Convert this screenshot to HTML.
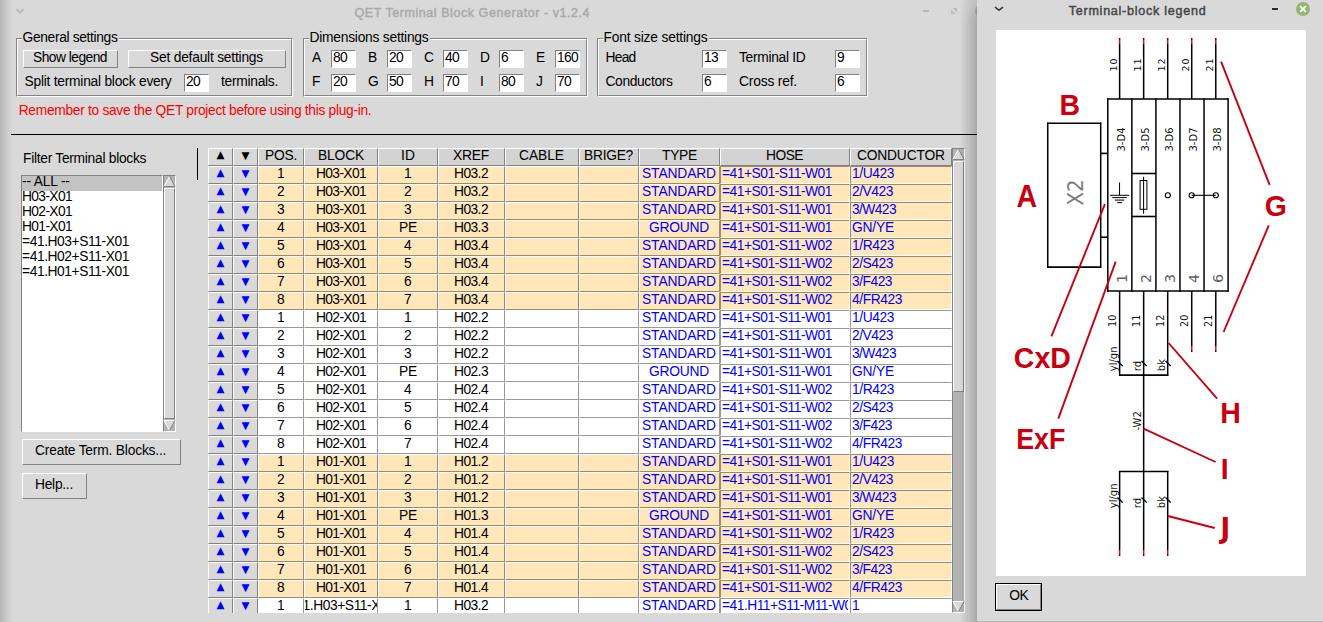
<!DOCTYPE html>
<html lang="en"><head><meta charset="utf-8"><title>QET Terminal Block Generator - v1.2.4</title>
<style>
html,body{margin:0;padding:0}
body{width:1323px;height:622px;overflow:hidden;background:#d9d9d9;position:relative;
 font-family:"Liberation Sans",sans-serif;font-size:13px;color:#000}
div,span,svg{position:absolute;box-sizing:border-box}
.t{white-space:pre;line-height:15px;height:15px;font-size:13.8px}
.rs{border:1px solid;border-color:#fff #828282 #828282 #fff;background:#d9d9d9}
.sk{border:1px solid;border-color:#828282 #fff #fff #828282;background:#fff}
.g1{border:1px solid;border-color:#828282 #fff #fff #828282}
.g2{border:1px solid;border-color:#fff #828282 #828282 #fff;left:0;top:0;right:0;bottom:0}
.lb{background:#d9d9d9;height:4px}
.hd{border:1px solid;border-color:#fff #828282 #828282 #fff;background:#d9d9d9}
.hc{border:1px solid;border-color:#fff #828282 #828282 #fff;background:#d3d3d3}
.cw{border:1px solid;border-color:#fff #998b70 #998b70 #fff;background:#ffe7ba}
.cn{border:1px solid;border-color:#fff #999 #999 #fff;background:#fff}
.ew{border:1px solid;border-color:#998b70 #fff #fff #998b70;background:#ffe7ba}
.en{border:1px solid;border-color:#999 #fff #fff #999;background:#fff}
.ar{font-family:"DejaVu Sans",sans-serif;font-size:10.4px;line-height:14px;height:14px;white-space:pre;text-align:center;width:25px}
.clip{overflow:hidden}
</style></head><body>

<div style="left:0;top:0;width:13px;height:622px;background:linear-gradient(90deg,#b6b6b6 0,#c4c4c4 35%,#d2d2d2 70%,#d9d9d9 100%)"></div>
<svg style="left:0;top:0" width="978" height="30" viewBox="0 0 978 30"><polyline points="16.5,9.3 20,12.5 23.5,9.3" fill="none" stroke="#b9b9b9" stroke-width="1.9"/><rect x="923" y="10" width="6" height="2" fill="#b7b7b7"/><polygon points="952.6,8 957,8 957,12.4" fill="#bbb"/><polygon points="951,9.6 951,14 955.4,14" fill="#bbb"/><circle cx="982.1" cy="11" r="7" fill="#b6b6b6"/></svg>
<span id="mt" style="left:354.5px;top:3.8px;font-size:12.5px;line-height:18px;white-space:pre;color:#a9a9a9;-webkit-text-stroke:0.45px #a9a9a9;letter-spacing:0.56px">QET Terminal Block Generator - v1.2.4</span>
<div class="g1" style="left:16px;top:38px;width:277px;height:59px;"><div class="g2"></div></div>
<div class="lb" style="left:22px;top:38px;width:97px;height:4px;"></div>
<span class="t " style="left:22.5px;top:30px;letter-spacing:-0.343px;">General settings</span>
<div class="g1" style="left:303px;top:38px;width:285px;height:59px;"><div class="g2"></div></div>
<div class="lb" style="left:309px;top:38px;width:121px;height:4px;"></div>
<span class="t " style="left:309.5px;top:30px;letter-spacing:-0.236px;">Dimensions settings</span>
<div class="g1" style="left:597px;top:38px;width:271px;height:59px;"><div class="g2"></div></div>
<div class="lb" style="left:603px;top:38px;width:106px;height:4px;"></div>
<span class="t " style="left:603.5px;top:30px;letter-spacing:-0.187px;">Font size settings</span>
<div class="rs" style="left:23px;top:50px;width:95px;height:18px;"></div>
<span class="t " style="left:33px;top:50px;letter-spacing:-0.527px;">Show legend</span>
<div class="rs" style="left:128px;top:50px;width:158px;height:18px;"></div>
<span class="t " style="left:150px;top:50px;letter-spacing:-0.218px;">Set default settings</span>
<span class="t " style="left:24.5px;top:74px;letter-spacing:-0.246px;">Split terminal block every</span>
<div class="sk" style="left:184px;top:74px;width:25px;height:18px;"></div>
<span class="t " style="left:186px;top:74px;letter-spacing:-0.675px;">20</span>
<span class="t " style="left:221px;top:74px;letter-spacing:-0.282px;">terminals.</span>
<span class="t " style="left:312px;top:50px;letter-spacing:-0.204px;">A</span>
<div class="sk" style="left:331px;top:50px;width:25px;height:18px;"></div>
<span class="t " style="left:333px;top:50px;letter-spacing:-0.675px;">80</span>
<span class="t " style="left:368px;top:50px;letter-spacing:-0.204px;">B</span>
<div class="sk" style="left:387px;top:50px;width:25px;height:18px;"></div>
<span class="t " style="left:389px;top:50px;letter-spacing:-0.675px;">20</span>
<span class="t " style="left:424px;top:50px;letter-spacing:0.032px;">C</span>
<div class="sk" style="left:443px;top:50px;width:25px;height:18px;"></div>
<span class="t " style="left:445px;top:50px;letter-spacing:-0.675px;">40</span>
<span class="t " style="left:480px;top:50px;letter-spacing:0.032px;">D</span>
<div class="sk" style="left:499px;top:50px;width:25px;height:18px;"></div>
<span class="t " style="left:501px;top:50px;letter-spacing:-0.675px;">6</span>
<span class="t " style="left:536px;top:50px;letter-spacing:-0.204px;">E</span>
<div class="sk" style="left:555px;top:50px;width:25px;height:18px;"></div>
<span class="t " style="left:557px;top:50px;letter-spacing:-0.675px;">160</span>
<span class="t " style="left:312px;top:74px;letter-spacing:-0.429px;">F</span>
<div class="sk" style="left:331px;top:74px;width:25px;height:18px;"></div>
<span class="t " style="left:333px;top:74px;letter-spacing:-0.675px;">20</span>
<span class="t " style="left:368px;top:74px;letter-spacing:-0.732px;">G</span>
<div class="sk" style="left:387px;top:74px;width:25px;height:18px;"></div>
<span class="t " style="left:389px;top:74px;letter-spacing:-0.675px;">50</span>
<span class="t " style="left:424px;top:74px;letter-spacing:-0.968px;">H</span>
<div class="sk" style="left:443px;top:74px;width:25px;height:18px;"></div>
<span class="t " style="left:445px;top:74px;letter-spacing:-0.675px;">70</span>
<span class="t " style="left:480px;top:74px;letter-spacing:0.168px;">I</span>
<div class="sk" style="left:499px;top:74px;width:25px;height:18px;"></div>
<span class="t " style="left:501px;top:74px;letter-spacing:-0.675px;">80</span>
<span class="t " style="left:536px;top:74px;letter-spacing:0.100px;">J</span>
<div class="sk" style="left:555px;top:74px;width:25px;height:18px;"></div>
<span class="t " style="left:557px;top:74px;letter-spacing:-0.675px;">70</span>
<span class="t " style="left:605.5px;top:50px;letter-spacing:-0.748px;">Head</span>
<div class="sk" style="left:702px;top:50px;width:25px;height:18px;"></div>
<span class="t " style="left:704px;top:50px;letter-spacing:-0.675px;">13</span>
<span class="t " style="left:605.5px;top:74px;letter-spacing:-0.357px;">Conductors</span>
<div class="sk" style="left:702px;top:74px;width:25px;height:18px;"></div>
<span class="t " style="left:704px;top:74px;letter-spacing:-0.675px;">6</span>
<span class="t " style="left:739px;top:50px;letter-spacing:-0.301px;">Terminal ID</span>
<div class="sk" style="left:835px;top:50px;width:25px;height:18px;"></div>
<span class="t " style="left:837px;top:50px;letter-spacing:-0.675px;">9</span>
<span class="t " style="left:739px;top:74px;letter-spacing:-0.181px;">Cross ref.</span>
<div class="sk" style="left:835px;top:74px;width:25px;height:18px;"></div>
<span class="t " style="left:837px;top:74px;letter-spacing:-0.675px;">6</span>
<span class="t " style="left:18.7px;top:103px;letter-spacing:-0.309px;color:#ff0000;">Remember to save the QET project before using this plug-in.</span>
<div style="left:11px;top:134px;width:970px;height:1px;background:#000"></div>
<span class="t " style="left:23px;top:151px;letter-spacing:-0.279px;">Filter Terminal blocks</span>
<div class="sk" style="left:21px;top:175px;width:142px;height:257px;"></div>
<div style="left:22px;top:176px;width:140px;height:15px;background:#c3c3c3"></div>
<span class="t " style="left:22px;top:174px;letter-spacing:-0.178px;">-- ALL --</span>
<span class="t " style="left:22px;top:189px;letter-spacing:-0.638px;">H03-X01</span>
<span class="t " style="left:22px;top:204px;letter-spacing:-0.638px;">H02-X01</span>
<span class="t " style="left:22px;top:219px;letter-spacing:-0.638px;">H01-X01</span>
<span class="t " style="left:22px;top:234px;letter-spacing:-0.421px;">=41.H03+S11-X01</span>
<span class="t " style="left:22px;top:249px;letter-spacing:-0.421px;">=41.H02+S11-X01</span>
<span class="t " style="left:22px;top:264px;letter-spacing:-0.421px;">=41.H01+S11-X01</span>
<div style="left:163px;top:175px;width:13px;height:257px;background:#b3b3b3;border:1px solid;border-color:#828282 #fff #fff #828282"></div>
<svg style="left:163px;top:175px" width="13" height="257" viewBox="0 0 13 257" shape-rendering="crispEdges"><polygon points="6.5,1.2 12.2,11.5 0.8,11.5" fill="#d9d9d9"/><line x1="6.5" y1="1.2" x2="0.9" y2="11.6" stroke="#fff" stroke-width="1" shape-rendering="auto"/><line x1="6.5" y1="1.2" x2="12.1" y2="11.6" stroke="#828282" stroke-width="1" shape-rendering="auto"/><rect x="1" y="11" width="11" height="1" fill="#828282"/><polygon points="6.5,255.6 12.2,245.5 0.8,245.5" fill="#d9d9d9"/><rect x="1" y="245" width="11" height="1" fill="#fff"/><line x1="6.5" y1="255.6" x2="0.9" y2="245.4" stroke="#fff" stroke-width="1" shape-rendering="auto"/><line x1="6.5" y1="255.6" x2="12.1" y2="245.4" stroke="#828282" stroke-width="1" shape-rendering="auto"/></svg>
<div class="rs" style="left:164px;top:188px;width:11px;height:231px"></div>
<div class="rs" style="left:22px;top:439px;width:159px;height:26px;"></div>
<span class="t " style="left:35px;top:443px;letter-spacing:-0.193px;">Create Term. Blocks...</span>
<div class="rs" style="left:22px;top:473px;width:65px;height:26px;"></div>
<span class="t " style="left:35px;top:477px;letter-spacing:-0.269px;">Help...</span>
<div style="left:197px;top:148px;width:1px;height:32px;background:#000"></div>
<div class="clip" style="left:208px;top:148px;width:744px;height:465px">
<div class="hd" style="left:0px;top:0px;width:25px;height:18px;"></div>
<span class="ar" style="left:0px;top:-1px">▲</span>
<div class="hd" style="left:25px;top:0px;width:25px;height:18px;"></div>
<span class="ar" style="left:25px;top:0px">▼</span>
<div class="hc" style="left:50px;top:0px;width:46px;height:18px;"></div>
<span class="t " style="left:57px;top:0px;letter-spacing:-0.243px;">POS.</span>
<div class="hc" style="left:96px;top:0px;width:74px;height:18px;"></div>
<span class="t " style="left:110px;top:0px;letter-spacing:-0.156px;">BLOCK</span>
<div class="hc" style="left:170px;top:0px;width:60px;height:18px;"></div>
<span class="t " style="left:193px;top:0px;letter-spacing:0.100px;">ID</span>
<div class="hc" style="left:230px;top:0px;width:67px;height:18px;"></div>
<span class="t " style="left:245px;top:0px;letter-spacing:-0.201px;">XREF</span>
<div class="hc" style="left:297px;top:0px;width:74px;height:18px;"></div>
<span class="t " style="left:311px;top:0px;letter-spacing:-0.051px;">CABLE</span>
<div class="hc" style="left:371px;top:0px;width:60px;height:18px;"></div>
<span class="t " style="left:376px;top:0px;letter-spacing:-0.269px;">BRIGE?</span>
<div class="hc" style="left:431px;top:0px;width:81px;height:18px;"></div>
<span class="t " style="left:454px;top:0px;letter-spacing:-0.260px;">TYPE</span>
<div class="hc" style="left:512px;top:0px;width:130px;height:18px;"></div>
<span class="t " style="left:558px;top:0px;letter-spacing:-0.527px;">HOSE</span>
<div class="hc" style="left:642px;top:0px;width:102px;height:18px;"></div>
<span class="t " style="left:649px;top:0px;letter-spacing:-0.189px;">CONDUCTOR</span>
<div class="hd" style="left:0px;top:18px;width:25px;height:18px;"></div>
<div class="hd" style="left:25px;top:18px;width:25px;height:18px;"></div>
<span class="ar" style="left:0px;top:17px;color:#0000ff">▲</span>
<span class="ar" style="left:25px;top:18px;color:#0000ff">▼</span>
<div class="cw" style="left:50px;top:18px;width:46px;height:18px;"></div>
<div class="cw" style="left:96px;top:18px;width:74px;height:18px;"></div>
<div class="cw" style="left:170px;top:18px;width:60px;height:18px;"></div>
<div class="cw" style="left:230px;top:18px;width:67px;height:18px;"></div>
<div class="cw" style="left:297px;top:18px;width:74px;height:18px;"></div>
<div class="cw" style="left:371px;top:18px;width:60px;height:18px;"></div>
<div class="cw" style="left:431px;top:18px;width:81px;height:18px;"></div>
<div class="ew" style="left:512px;top:18px;width:130px;height:18px;"></div>
<div class="ew" style="left:642px;top:18px;width:102px;height:18px;"></div>
<span class="t " style="left:69px;top:18px;letter-spacing:-0.675px;">1</span>
<span class="t " style="left:108px;top:18px;letter-spacing:-0.638px;">H03-X01</span>
<span class="t " style="left:196px;top:18px;letter-spacing:-0.675px;">1</span>
<span class="t " style="left:246px;top:18px;letter-spacing:-0.565px;">H03.2</span>
<span class="t " style="left:434px;top:18px;letter-spacing:-0.114px;color:#0000ff;">STANDARD</span>
<div class="clip" style="left:514px;top:19px;width:126px;height:16px">
<span class="t " style="left:0px;top:-1px;letter-spacing:-0.476px;color:#0000ff;">=41+S01-S11-W01</span>
</div>
<span class="t " style="left:644px;top:18px;letter-spacing:-0.417px;color:#0000ff;">1/U423</span>
<div class="hd" style="left:0px;top:36px;width:25px;height:18px;"></div>
<div class="hd" style="left:25px;top:36px;width:25px;height:18px;"></div>
<span class="ar" style="left:0px;top:35px;color:#0000ff">▲</span>
<span class="ar" style="left:25px;top:36px;color:#0000ff">▼</span>
<div class="cw" style="left:50px;top:36px;width:46px;height:18px;"></div>
<div class="cw" style="left:96px;top:36px;width:74px;height:18px;"></div>
<div class="cw" style="left:170px;top:36px;width:60px;height:18px;"></div>
<div class="cw" style="left:230px;top:36px;width:67px;height:18px;"></div>
<div class="cw" style="left:297px;top:36px;width:74px;height:18px;"></div>
<div class="cw" style="left:371px;top:36px;width:60px;height:18px;"></div>
<div class="cw" style="left:431px;top:36px;width:81px;height:18px;"></div>
<div class="ew" style="left:512px;top:36px;width:130px;height:18px;"></div>
<div class="ew" style="left:642px;top:36px;width:102px;height:18px;"></div>
<span class="t " style="left:69px;top:36px;letter-spacing:-0.675px;">2</span>
<span class="t " style="left:108px;top:36px;letter-spacing:-0.638px;">H03-X01</span>
<span class="t " style="left:196px;top:36px;letter-spacing:-0.675px;">2</span>
<span class="t " style="left:246px;top:36px;letter-spacing:-0.565px;">H03.2</span>
<span class="t " style="left:434px;top:36px;letter-spacing:-0.114px;color:#0000ff;">STANDARD</span>
<div class="clip" style="left:514px;top:37px;width:126px;height:16px">
<span class="t " style="left:0px;top:-1px;letter-spacing:-0.476px;color:#0000ff;">=41+S01-S11-W01</span>
</div>
<span class="t " style="left:644px;top:36px;letter-spacing:-0.456px;color:#0000ff;">2/V423</span>
<div class="hd" style="left:0px;top:54px;width:25px;height:18px;"></div>
<div class="hd" style="left:25px;top:54px;width:25px;height:18px;"></div>
<span class="ar" style="left:0px;top:53px;color:#0000ff">▲</span>
<span class="ar" style="left:25px;top:54px;color:#0000ff">▼</span>
<div class="cw" style="left:50px;top:54px;width:46px;height:18px;"></div>
<div class="cw" style="left:96px;top:54px;width:74px;height:18px;"></div>
<div class="cw" style="left:170px;top:54px;width:60px;height:18px;"></div>
<div class="cw" style="left:230px;top:54px;width:67px;height:18px;"></div>
<div class="cw" style="left:297px;top:54px;width:74px;height:18px;"></div>
<div class="cw" style="left:371px;top:54px;width:60px;height:18px;"></div>
<div class="cw" style="left:431px;top:54px;width:81px;height:18px;"></div>
<div class="ew" style="left:512px;top:54px;width:130px;height:18px;"></div>
<div class="ew" style="left:642px;top:54px;width:102px;height:18px;"></div>
<span class="t " style="left:69px;top:54px;letter-spacing:-0.675px;">3</span>
<span class="t " style="left:108px;top:54px;letter-spacing:-0.638px;">H03-X01</span>
<span class="t " style="left:196px;top:54px;letter-spacing:-0.675px;">3</span>
<span class="t " style="left:246px;top:54px;letter-spacing:-0.565px;">H03.2</span>
<span class="t " style="left:434px;top:54px;letter-spacing:-0.114px;color:#0000ff;">STANDARD</span>
<div class="clip" style="left:514px;top:55px;width:126px;height:16px">
<span class="t " style="left:0px;top:-1px;letter-spacing:-0.476px;color:#0000ff;">=41+S01-S11-W01</span>
</div>
<span class="t " style="left:644px;top:54px;letter-spacing:-0.593px;color:#0000ff;">3/W423</span>
<div class="hd" style="left:0px;top:72px;width:25px;height:18px;"></div>
<div class="hd" style="left:25px;top:72px;width:25px;height:18px;"></div>
<span class="ar" style="left:0px;top:71px;color:#0000ff">▲</span>
<span class="ar" style="left:25px;top:72px;color:#0000ff">▼</span>
<div class="cw" style="left:50px;top:72px;width:46px;height:18px;"></div>
<div class="cw" style="left:96px;top:72px;width:74px;height:18px;"></div>
<div class="cw" style="left:170px;top:72px;width:60px;height:18px;"></div>
<div class="cw" style="left:230px;top:72px;width:67px;height:18px;"></div>
<div class="cw" style="left:297px;top:72px;width:74px;height:18px;"></div>
<div class="cw" style="left:371px;top:72px;width:60px;height:18px;"></div>
<div class="cw" style="left:431px;top:72px;width:81px;height:18px;"></div>
<div class="ew" style="left:512px;top:72px;width:130px;height:18px;"></div>
<div class="ew" style="left:642px;top:72px;width:102px;height:18px;"></div>
<span class="t " style="left:69px;top:72px;letter-spacing:-0.675px;">4</span>
<span class="t " style="left:108px;top:72px;letter-spacing:-0.638px;">H03-X01</span>
<span class="t " style="left:191px;top:72px;letter-spacing:-0.204px;">PE</span>
<span class="t " style="left:246px;top:72px;letter-spacing:-0.565px;">H03.3</span>
<span class="t " style="left:441px;top:72px;letter-spacing:-0.223px;color:#0000ff;">GROUND</span>
<div class="clip" style="left:514px;top:73px;width:126px;height:16px">
<span class="t " style="left:0px;top:-1px;letter-spacing:-0.476px;color:#0000ff;">=41+S01-S11-W01</span>
</div>
<span class="t " style="left:644px;top:72px;letter-spacing:-0.188px;color:#0000ff;">GN/YE</span>
<div class="hd" style="left:0px;top:90px;width:25px;height:18px;"></div>
<div class="hd" style="left:25px;top:90px;width:25px;height:18px;"></div>
<span class="ar" style="left:0px;top:89px;color:#0000ff">▲</span>
<span class="ar" style="left:25px;top:90px;color:#0000ff">▼</span>
<div class="cw" style="left:50px;top:90px;width:46px;height:18px;"></div>
<div class="cw" style="left:96px;top:90px;width:74px;height:18px;"></div>
<div class="cw" style="left:170px;top:90px;width:60px;height:18px;"></div>
<div class="cw" style="left:230px;top:90px;width:67px;height:18px;"></div>
<div class="cw" style="left:297px;top:90px;width:74px;height:18px;"></div>
<div class="cw" style="left:371px;top:90px;width:60px;height:18px;"></div>
<div class="cw" style="left:431px;top:90px;width:81px;height:18px;"></div>
<div class="ew" style="left:512px;top:90px;width:130px;height:18px;"></div>
<div class="ew" style="left:642px;top:90px;width:102px;height:18px;"></div>
<span class="t " style="left:69px;top:90px;letter-spacing:-0.675px;">5</span>
<span class="t " style="left:108px;top:90px;letter-spacing:-0.638px;">H03-X01</span>
<span class="t " style="left:196px;top:90px;letter-spacing:-0.675px;">4</span>
<span class="t " style="left:246px;top:90px;letter-spacing:-0.565px;">H03.4</span>
<span class="t " style="left:434px;top:90px;letter-spacing:-0.114px;color:#0000ff;">STANDARD</span>
<div class="clip" style="left:514px;top:91px;width:126px;height:16px">
<span class="t " style="left:0px;top:-1px;letter-spacing:-0.476px;color:#0000ff;">=41+S01-S11-W02</span>
</div>
<span class="t " style="left:644px;top:90px;letter-spacing:-0.417px;color:#0000ff;">1/R423</span>
<div class="hd" style="left:0px;top:108px;width:25px;height:18px;"></div>
<div class="hd" style="left:25px;top:108px;width:25px;height:18px;"></div>
<span class="ar" style="left:0px;top:107px;color:#0000ff">▲</span>
<span class="ar" style="left:25px;top:108px;color:#0000ff">▼</span>
<div class="cw" style="left:50px;top:108px;width:46px;height:18px;"></div>
<div class="cw" style="left:96px;top:108px;width:74px;height:18px;"></div>
<div class="cw" style="left:170px;top:108px;width:60px;height:18px;"></div>
<div class="cw" style="left:230px;top:108px;width:67px;height:18px;"></div>
<div class="cw" style="left:297px;top:108px;width:74px;height:18px;"></div>
<div class="cw" style="left:371px;top:108px;width:60px;height:18px;"></div>
<div class="cw" style="left:431px;top:108px;width:81px;height:18px;"></div>
<div class="ew" style="left:512px;top:108px;width:130px;height:18px;"></div>
<div class="ew" style="left:642px;top:108px;width:102px;height:18px;"></div>
<span class="t " style="left:69px;top:108px;letter-spacing:-0.675px;">6</span>
<span class="t " style="left:108px;top:108px;letter-spacing:-0.638px;">H03-X01</span>
<span class="t " style="left:196px;top:108px;letter-spacing:-0.675px;">5</span>
<span class="t " style="left:246px;top:108px;letter-spacing:-0.565px;">H03.4</span>
<span class="t " style="left:434px;top:108px;letter-spacing:-0.114px;color:#0000ff;">STANDARD</span>
<div class="clip" style="left:514px;top:109px;width:126px;height:16px">
<span class="t " style="left:0px;top:-1px;letter-spacing:-0.476px;color:#0000ff;">=41+S01-S11-W02</span>
</div>
<span class="t " style="left:644px;top:108px;letter-spacing:-0.456px;color:#0000ff;">2/S423</span>
<div class="hd" style="left:0px;top:126px;width:25px;height:18px;"></div>
<div class="hd" style="left:25px;top:126px;width:25px;height:18px;"></div>
<span class="ar" style="left:0px;top:125px;color:#0000ff">▲</span>
<span class="ar" style="left:25px;top:126px;color:#0000ff">▼</span>
<div class="cw" style="left:50px;top:126px;width:46px;height:18px;"></div>
<div class="cw" style="left:96px;top:126px;width:74px;height:18px;"></div>
<div class="cw" style="left:170px;top:126px;width:60px;height:18px;"></div>
<div class="cw" style="left:230px;top:126px;width:67px;height:18px;"></div>
<div class="cw" style="left:297px;top:126px;width:74px;height:18px;"></div>
<div class="cw" style="left:371px;top:126px;width:60px;height:18px;"></div>
<div class="cw" style="left:431px;top:126px;width:81px;height:18px;"></div>
<div class="ew" style="left:512px;top:126px;width:130px;height:18px;"></div>
<div class="ew" style="left:642px;top:126px;width:102px;height:18px;"></div>
<span class="t " style="left:69px;top:126px;letter-spacing:-0.675px;">7</span>
<span class="t " style="left:108px;top:126px;letter-spacing:-0.638px;">H03-X01</span>
<span class="t " style="left:196px;top:126px;letter-spacing:-0.675px;">6</span>
<span class="t " style="left:246px;top:126px;letter-spacing:-0.565px;">H03.4</span>
<span class="t " style="left:434px;top:126px;letter-spacing:-0.114px;color:#0000ff;">STANDARD</span>
<div class="clip" style="left:514px;top:127px;width:126px;height:16px">
<span class="t " style="left:0px;top:-1px;letter-spacing:-0.476px;color:#0000ff;">=41+S01-S11-W02</span>
</div>
<span class="t " style="left:644px;top:126px;letter-spacing:-0.493px;color:#0000ff;">3/F423</span>
<div class="hd" style="left:0px;top:144px;width:25px;height:18px;"></div>
<div class="hd" style="left:25px;top:144px;width:25px;height:18px;"></div>
<span class="ar" style="left:0px;top:143px;color:#0000ff">▲</span>
<span class="ar" style="left:25px;top:144px;color:#0000ff">▼</span>
<div class="cw" style="left:50px;top:144px;width:46px;height:18px;"></div>
<div class="cw" style="left:96px;top:144px;width:74px;height:18px;"></div>
<div class="cw" style="left:170px;top:144px;width:60px;height:18px;"></div>
<div class="cw" style="left:230px;top:144px;width:67px;height:18px;"></div>
<div class="cw" style="left:297px;top:144px;width:74px;height:18px;"></div>
<div class="cw" style="left:371px;top:144px;width:60px;height:18px;"></div>
<div class="cw" style="left:431px;top:144px;width:81px;height:18px;"></div>
<div class="ew" style="left:512px;top:144px;width:130px;height:18px;"></div>
<div class="ew" style="left:642px;top:144px;width:102px;height:18px;"></div>
<span class="t " style="left:69px;top:144px;letter-spacing:-0.675px;">8</span>
<span class="t " style="left:108px;top:144px;letter-spacing:-0.638px;">H03-X01</span>
<span class="t " style="left:196px;top:144px;letter-spacing:-0.675px;">7</span>
<span class="t " style="left:246px;top:144px;letter-spacing:-0.565px;">H03.4</span>
<span class="t " style="left:434px;top:144px;letter-spacing:-0.114px;color:#0000ff;">STANDARD</span>
<div class="clip" style="left:514px;top:145px;width:126px;height:16px">
<span class="t " style="left:0px;top:-1px;letter-spacing:-0.476px;color:#0000ff;">=41+S01-S11-W02</span>
</div>
<span class="t " style="left:644px;top:144px;letter-spacing:-0.418px;color:#0000ff;">4/FR423</span>
<div class="hd" style="left:0px;top:162px;width:25px;height:18px;"></div>
<div class="hd" style="left:25px;top:162px;width:25px;height:18px;"></div>
<span class="ar" style="left:0px;top:161px;color:#0000ff">▲</span>
<span class="ar" style="left:25px;top:162px;color:#0000ff">▼</span>
<div class="cn" style="left:50px;top:162px;width:46px;height:18px;"></div>
<div class="cn" style="left:96px;top:162px;width:74px;height:18px;"></div>
<div class="cn" style="left:170px;top:162px;width:60px;height:18px;"></div>
<div class="cn" style="left:230px;top:162px;width:67px;height:18px;"></div>
<div class="cn" style="left:297px;top:162px;width:74px;height:18px;"></div>
<div class="cn" style="left:371px;top:162px;width:60px;height:18px;"></div>
<div class="cn" style="left:431px;top:162px;width:81px;height:18px;"></div>
<div class="en" style="left:512px;top:162px;width:130px;height:18px;"></div>
<div class="en" style="left:642px;top:162px;width:102px;height:18px;"></div>
<span class="t " style="left:69px;top:162px;letter-spacing:-0.675px;">1</span>
<span class="t " style="left:108px;top:162px;letter-spacing:-0.638px;">H02-X01</span>
<span class="t " style="left:196px;top:162px;letter-spacing:-0.675px;">1</span>
<span class="t " style="left:246px;top:162px;letter-spacing:-0.565px;">H02.2</span>
<span class="t " style="left:434px;top:162px;letter-spacing:-0.114px;color:#0000ff;">STANDARD</span>
<div class="clip" style="left:514px;top:163px;width:126px;height:16px">
<span class="t " style="left:0px;top:-1px;letter-spacing:-0.476px;color:#0000ff;">=41+S01-S11-W01</span>
</div>
<span class="t " style="left:644px;top:162px;letter-spacing:-0.417px;color:#0000ff;">1/U423</span>
<div class="hd" style="left:0px;top:180px;width:25px;height:18px;"></div>
<div class="hd" style="left:25px;top:180px;width:25px;height:18px;"></div>
<span class="ar" style="left:0px;top:179px;color:#0000ff">▲</span>
<span class="ar" style="left:25px;top:180px;color:#0000ff">▼</span>
<div class="cn" style="left:50px;top:180px;width:46px;height:18px;"></div>
<div class="cn" style="left:96px;top:180px;width:74px;height:18px;"></div>
<div class="cn" style="left:170px;top:180px;width:60px;height:18px;"></div>
<div class="cn" style="left:230px;top:180px;width:67px;height:18px;"></div>
<div class="cn" style="left:297px;top:180px;width:74px;height:18px;"></div>
<div class="cn" style="left:371px;top:180px;width:60px;height:18px;"></div>
<div class="cn" style="left:431px;top:180px;width:81px;height:18px;"></div>
<div class="en" style="left:512px;top:180px;width:130px;height:18px;"></div>
<div class="en" style="left:642px;top:180px;width:102px;height:18px;"></div>
<span class="t " style="left:69px;top:180px;letter-spacing:-0.675px;">2</span>
<span class="t " style="left:108px;top:180px;letter-spacing:-0.638px;">H02-X01</span>
<span class="t " style="left:196px;top:180px;letter-spacing:-0.675px;">2</span>
<span class="t " style="left:246px;top:180px;letter-spacing:-0.565px;">H02.2</span>
<span class="t " style="left:434px;top:180px;letter-spacing:-0.114px;color:#0000ff;">STANDARD</span>
<div class="clip" style="left:514px;top:181px;width:126px;height:16px">
<span class="t " style="left:0px;top:-1px;letter-spacing:-0.476px;color:#0000ff;">=41+S01-S11-W01</span>
</div>
<span class="t " style="left:644px;top:180px;letter-spacing:-0.456px;color:#0000ff;">2/V423</span>
<div class="hd" style="left:0px;top:198px;width:25px;height:18px;"></div>
<div class="hd" style="left:25px;top:198px;width:25px;height:18px;"></div>
<span class="ar" style="left:0px;top:197px;color:#0000ff">▲</span>
<span class="ar" style="left:25px;top:198px;color:#0000ff">▼</span>
<div class="cn" style="left:50px;top:198px;width:46px;height:18px;"></div>
<div class="cn" style="left:96px;top:198px;width:74px;height:18px;"></div>
<div class="cn" style="left:170px;top:198px;width:60px;height:18px;"></div>
<div class="cn" style="left:230px;top:198px;width:67px;height:18px;"></div>
<div class="cn" style="left:297px;top:198px;width:74px;height:18px;"></div>
<div class="cn" style="left:371px;top:198px;width:60px;height:18px;"></div>
<div class="cn" style="left:431px;top:198px;width:81px;height:18px;"></div>
<div class="en" style="left:512px;top:198px;width:130px;height:18px;"></div>
<div class="en" style="left:642px;top:198px;width:102px;height:18px;"></div>
<span class="t " style="left:69px;top:198px;letter-spacing:-0.675px;">3</span>
<span class="t " style="left:108px;top:198px;letter-spacing:-0.638px;">H02-X01</span>
<span class="t " style="left:196px;top:198px;letter-spacing:-0.675px;">3</span>
<span class="t " style="left:246px;top:198px;letter-spacing:-0.565px;">H02.2</span>
<span class="t " style="left:434px;top:198px;letter-spacing:-0.114px;color:#0000ff;">STANDARD</span>
<div class="clip" style="left:514px;top:199px;width:126px;height:16px">
<span class="t " style="left:0px;top:-1px;letter-spacing:-0.476px;color:#0000ff;">=41+S01-S11-W01</span>
</div>
<span class="t " style="left:644px;top:198px;letter-spacing:-0.593px;color:#0000ff;">3/W423</span>
<div class="hd" style="left:0px;top:216px;width:25px;height:18px;"></div>
<div class="hd" style="left:25px;top:216px;width:25px;height:18px;"></div>
<span class="ar" style="left:0px;top:215px;color:#0000ff">▲</span>
<span class="ar" style="left:25px;top:216px;color:#0000ff">▼</span>
<div class="cn" style="left:50px;top:216px;width:46px;height:18px;"></div>
<div class="cn" style="left:96px;top:216px;width:74px;height:18px;"></div>
<div class="cn" style="left:170px;top:216px;width:60px;height:18px;"></div>
<div class="cn" style="left:230px;top:216px;width:67px;height:18px;"></div>
<div class="cn" style="left:297px;top:216px;width:74px;height:18px;"></div>
<div class="cn" style="left:371px;top:216px;width:60px;height:18px;"></div>
<div class="cn" style="left:431px;top:216px;width:81px;height:18px;"></div>
<div class="en" style="left:512px;top:216px;width:130px;height:18px;"></div>
<div class="en" style="left:642px;top:216px;width:102px;height:18px;"></div>
<span class="t " style="left:69px;top:216px;letter-spacing:-0.675px;">4</span>
<span class="t " style="left:108px;top:216px;letter-spacing:-0.638px;">H02-X01</span>
<span class="t " style="left:191px;top:216px;letter-spacing:-0.204px;">PE</span>
<span class="t " style="left:246px;top:216px;letter-spacing:-0.565px;">H02.3</span>
<span class="t " style="left:441px;top:216px;letter-spacing:-0.223px;color:#0000ff;">GROUND</span>
<div class="clip" style="left:514px;top:217px;width:126px;height:16px">
<span class="t " style="left:0px;top:-1px;letter-spacing:-0.476px;color:#0000ff;">=41+S01-S11-W01</span>
</div>
<span class="t " style="left:644px;top:216px;letter-spacing:-0.188px;color:#0000ff;">GN/YE</span>
<div class="hd" style="left:0px;top:234px;width:25px;height:18px;"></div>
<div class="hd" style="left:25px;top:234px;width:25px;height:18px;"></div>
<span class="ar" style="left:0px;top:233px;color:#0000ff">▲</span>
<span class="ar" style="left:25px;top:234px;color:#0000ff">▼</span>
<div class="cn" style="left:50px;top:234px;width:46px;height:18px;"></div>
<div class="cn" style="left:96px;top:234px;width:74px;height:18px;"></div>
<div class="cn" style="left:170px;top:234px;width:60px;height:18px;"></div>
<div class="cn" style="left:230px;top:234px;width:67px;height:18px;"></div>
<div class="cn" style="left:297px;top:234px;width:74px;height:18px;"></div>
<div class="cn" style="left:371px;top:234px;width:60px;height:18px;"></div>
<div class="cn" style="left:431px;top:234px;width:81px;height:18px;"></div>
<div class="en" style="left:512px;top:234px;width:130px;height:18px;"></div>
<div class="en" style="left:642px;top:234px;width:102px;height:18px;"></div>
<span class="t " style="left:69px;top:234px;letter-spacing:-0.675px;">5</span>
<span class="t " style="left:108px;top:234px;letter-spacing:-0.638px;">H02-X01</span>
<span class="t " style="left:196px;top:234px;letter-spacing:-0.675px;">4</span>
<span class="t " style="left:246px;top:234px;letter-spacing:-0.565px;">H02.4</span>
<span class="t " style="left:434px;top:234px;letter-spacing:-0.114px;color:#0000ff;">STANDARD</span>
<div class="clip" style="left:514px;top:235px;width:126px;height:16px">
<span class="t " style="left:0px;top:-1px;letter-spacing:-0.476px;color:#0000ff;">=41+S01-S11-W02</span>
</div>
<span class="t " style="left:644px;top:234px;letter-spacing:-0.417px;color:#0000ff;">1/R423</span>
<div class="hd" style="left:0px;top:252px;width:25px;height:18px;"></div>
<div class="hd" style="left:25px;top:252px;width:25px;height:18px;"></div>
<span class="ar" style="left:0px;top:251px;color:#0000ff">▲</span>
<span class="ar" style="left:25px;top:252px;color:#0000ff">▼</span>
<div class="cn" style="left:50px;top:252px;width:46px;height:18px;"></div>
<div class="cn" style="left:96px;top:252px;width:74px;height:18px;"></div>
<div class="cn" style="left:170px;top:252px;width:60px;height:18px;"></div>
<div class="cn" style="left:230px;top:252px;width:67px;height:18px;"></div>
<div class="cn" style="left:297px;top:252px;width:74px;height:18px;"></div>
<div class="cn" style="left:371px;top:252px;width:60px;height:18px;"></div>
<div class="cn" style="left:431px;top:252px;width:81px;height:18px;"></div>
<div class="en" style="left:512px;top:252px;width:130px;height:18px;"></div>
<div class="en" style="left:642px;top:252px;width:102px;height:18px;"></div>
<span class="t " style="left:69px;top:252px;letter-spacing:-0.675px;">6</span>
<span class="t " style="left:108px;top:252px;letter-spacing:-0.638px;">H02-X01</span>
<span class="t " style="left:196px;top:252px;letter-spacing:-0.675px;">5</span>
<span class="t " style="left:246px;top:252px;letter-spacing:-0.565px;">H02.4</span>
<span class="t " style="left:434px;top:252px;letter-spacing:-0.114px;color:#0000ff;">STANDARD</span>
<div class="clip" style="left:514px;top:253px;width:126px;height:16px">
<span class="t " style="left:0px;top:-1px;letter-spacing:-0.476px;color:#0000ff;">=41+S01-S11-W02</span>
</div>
<span class="t " style="left:644px;top:252px;letter-spacing:-0.456px;color:#0000ff;">2/S423</span>
<div class="hd" style="left:0px;top:270px;width:25px;height:18px;"></div>
<div class="hd" style="left:25px;top:270px;width:25px;height:18px;"></div>
<span class="ar" style="left:0px;top:269px;color:#0000ff">▲</span>
<span class="ar" style="left:25px;top:270px;color:#0000ff">▼</span>
<div class="cn" style="left:50px;top:270px;width:46px;height:18px;"></div>
<div class="cn" style="left:96px;top:270px;width:74px;height:18px;"></div>
<div class="cn" style="left:170px;top:270px;width:60px;height:18px;"></div>
<div class="cn" style="left:230px;top:270px;width:67px;height:18px;"></div>
<div class="cn" style="left:297px;top:270px;width:74px;height:18px;"></div>
<div class="cn" style="left:371px;top:270px;width:60px;height:18px;"></div>
<div class="cn" style="left:431px;top:270px;width:81px;height:18px;"></div>
<div class="en" style="left:512px;top:270px;width:130px;height:18px;"></div>
<div class="en" style="left:642px;top:270px;width:102px;height:18px;"></div>
<span class="t " style="left:69px;top:270px;letter-spacing:-0.675px;">7</span>
<span class="t " style="left:108px;top:270px;letter-spacing:-0.638px;">H02-X01</span>
<span class="t " style="left:196px;top:270px;letter-spacing:-0.675px;">6</span>
<span class="t " style="left:246px;top:270px;letter-spacing:-0.565px;">H02.4</span>
<span class="t " style="left:434px;top:270px;letter-spacing:-0.114px;color:#0000ff;">STANDARD</span>
<div class="clip" style="left:514px;top:271px;width:126px;height:16px">
<span class="t " style="left:0px;top:-1px;letter-spacing:-0.476px;color:#0000ff;">=41+S01-S11-W02</span>
</div>
<span class="t " style="left:644px;top:270px;letter-spacing:-0.493px;color:#0000ff;">3/F423</span>
<div class="hd" style="left:0px;top:288px;width:25px;height:18px;"></div>
<div class="hd" style="left:25px;top:288px;width:25px;height:18px;"></div>
<span class="ar" style="left:0px;top:287px;color:#0000ff">▲</span>
<span class="ar" style="left:25px;top:288px;color:#0000ff">▼</span>
<div class="cn" style="left:50px;top:288px;width:46px;height:18px;"></div>
<div class="cn" style="left:96px;top:288px;width:74px;height:18px;"></div>
<div class="cn" style="left:170px;top:288px;width:60px;height:18px;"></div>
<div class="cn" style="left:230px;top:288px;width:67px;height:18px;"></div>
<div class="cn" style="left:297px;top:288px;width:74px;height:18px;"></div>
<div class="cn" style="left:371px;top:288px;width:60px;height:18px;"></div>
<div class="cn" style="left:431px;top:288px;width:81px;height:18px;"></div>
<div class="en" style="left:512px;top:288px;width:130px;height:18px;"></div>
<div class="en" style="left:642px;top:288px;width:102px;height:18px;"></div>
<span class="t " style="left:69px;top:288px;letter-spacing:-0.675px;">8</span>
<span class="t " style="left:108px;top:288px;letter-spacing:-0.638px;">H02-X01</span>
<span class="t " style="left:196px;top:288px;letter-spacing:-0.675px;">7</span>
<span class="t " style="left:246px;top:288px;letter-spacing:-0.565px;">H02.4</span>
<span class="t " style="left:434px;top:288px;letter-spacing:-0.114px;color:#0000ff;">STANDARD</span>
<div class="clip" style="left:514px;top:289px;width:126px;height:16px">
<span class="t " style="left:0px;top:-1px;letter-spacing:-0.476px;color:#0000ff;">=41+S01-S11-W02</span>
</div>
<span class="t " style="left:644px;top:288px;letter-spacing:-0.418px;color:#0000ff;">4/FR423</span>
<div class="hd" style="left:0px;top:306px;width:25px;height:18px;"></div>
<div class="hd" style="left:25px;top:306px;width:25px;height:18px;"></div>
<span class="ar" style="left:0px;top:305px;color:#0000ff">▲</span>
<span class="ar" style="left:25px;top:306px;color:#0000ff">▼</span>
<div class="cw" style="left:50px;top:306px;width:46px;height:18px;"></div>
<div class="cw" style="left:96px;top:306px;width:74px;height:18px;"></div>
<div class="cw" style="left:170px;top:306px;width:60px;height:18px;"></div>
<div class="cw" style="left:230px;top:306px;width:67px;height:18px;"></div>
<div class="cw" style="left:297px;top:306px;width:74px;height:18px;"></div>
<div class="cw" style="left:371px;top:306px;width:60px;height:18px;"></div>
<div class="cw" style="left:431px;top:306px;width:81px;height:18px;"></div>
<div class="ew" style="left:512px;top:306px;width:130px;height:18px;"></div>
<div class="ew" style="left:642px;top:306px;width:102px;height:18px;"></div>
<span class="t " style="left:69px;top:306px;letter-spacing:-0.675px;">1</span>
<span class="t " style="left:108px;top:306px;letter-spacing:-0.638px;">H01-X01</span>
<span class="t " style="left:196px;top:306px;letter-spacing:-0.675px;">1</span>
<span class="t " style="left:246px;top:306px;letter-spacing:-0.565px;">H01.2</span>
<span class="t " style="left:434px;top:306px;letter-spacing:-0.114px;color:#0000ff;">STANDARD</span>
<div class="clip" style="left:514px;top:307px;width:126px;height:16px">
<span class="t " style="left:0px;top:-1px;letter-spacing:-0.476px;color:#0000ff;">=41+S01-S11-W01</span>
</div>
<span class="t " style="left:644px;top:306px;letter-spacing:-0.417px;color:#0000ff;">1/U423</span>
<div class="hd" style="left:0px;top:324px;width:25px;height:18px;"></div>
<div class="hd" style="left:25px;top:324px;width:25px;height:18px;"></div>
<span class="ar" style="left:0px;top:323px;color:#0000ff">▲</span>
<span class="ar" style="left:25px;top:324px;color:#0000ff">▼</span>
<div class="cw" style="left:50px;top:324px;width:46px;height:18px;"></div>
<div class="cw" style="left:96px;top:324px;width:74px;height:18px;"></div>
<div class="cw" style="left:170px;top:324px;width:60px;height:18px;"></div>
<div class="cw" style="left:230px;top:324px;width:67px;height:18px;"></div>
<div class="cw" style="left:297px;top:324px;width:74px;height:18px;"></div>
<div class="cw" style="left:371px;top:324px;width:60px;height:18px;"></div>
<div class="cw" style="left:431px;top:324px;width:81px;height:18px;"></div>
<div class="ew" style="left:512px;top:324px;width:130px;height:18px;"></div>
<div class="ew" style="left:642px;top:324px;width:102px;height:18px;"></div>
<span class="t " style="left:69px;top:324px;letter-spacing:-0.675px;">2</span>
<span class="t " style="left:108px;top:324px;letter-spacing:-0.638px;">H01-X01</span>
<span class="t " style="left:196px;top:324px;letter-spacing:-0.675px;">2</span>
<span class="t " style="left:246px;top:324px;letter-spacing:-0.565px;">H01.2</span>
<span class="t " style="left:434px;top:324px;letter-spacing:-0.114px;color:#0000ff;">STANDARD</span>
<div class="clip" style="left:514px;top:325px;width:126px;height:16px">
<span class="t " style="left:0px;top:-1px;letter-spacing:-0.476px;color:#0000ff;">=41+S01-S11-W01</span>
</div>
<span class="t " style="left:644px;top:324px;letter-spacing:-0.456px;color:#0000ff;">2/V423</span>
<div class="hd" style="left:0px;top:342px;width:25px;height:18px;"></div>
<div class="hd" style="left:25px;top:342px;width:25px;height:18px;"></div>
<span class="ar" style="left:0px;top:341px;color:#0000ff">▲</span>
<span class="ar" style="left:25px;top:342px;color:#0000ff">▼</span>
<div class="cw" style="left:50px;top:342px;width:46px;height:18px;"></div>
<div class="cw" style="left:96px;top:342px;width:74px;height:18px;"></div>
<div class="cw" style="left:170px;top:342px;width:60px;height:18px;"></div>
<div class="cw" style="left:230px;top:342px;width:67px;height:18px;"></div>
<div class="cw" style="left:297px;top:342px;width:74px;height:18px;"></div>
<div class="cw" style="left:371px;top:342px;width:60px;height:18px;"></div>
<div class="cw" style="left:431px;top:342px;width:81px;height:18px;"></div>
<div class="ew" style="left:512px;top:342px;width:130px;height:18px;"></div>
<div class="ew" style="left:642px;top:342px;width:102px;height:18px;"></div>
<span class="t " style="left:69px;top:342px;letter-spacing:-0.675px;">3</span>
<span class="t " style="left:108px;top:342px;letter-spacing:-0.638px;">H01-X01</span>
<span class="t " style="left:196px;top:342px;letter-spacing:-0.675px;">3</span>
<span class="t " style="left:246px;top:342px;letter-spacing:-0.565px;">H01.2</span>
<span class="t " style="left:434px;top:342px;letter-spacing:-0.114px;color:#0000ff;">STANDARD</span>
<div class="clip" style="left:514px;top:343px;width:126px;height:16px">
<span class="t " style="left:0px;top:-1px;letter-spacing:-0.476px;color:#0000ff;">=41+S01-S11-W01</span>
</div>
<span class="t " style="left:644px;top:342px;letter-spacing:-0.593px;color:#0000ff;">3/W423</span>
<div class="hd" style="left:0px;top:360px;width:25px;height:18px;"></div>
<div class="hd" style="left:25px;top:360px;width:25px;height:18px;"></div>
<span class="ar" style="left:0px;top:359px;color:#0000ff">▲</span>
<span class="ar" style="left:25px;top:360px;color:#0000ff">▼</span>
<div class="cw" style="left:50px;top:360px;width:46px;height:18px;"></div>
<div class="cw" style="left:96px;top:360px;width:74px;height:18px;"></div>
<div class="cw" style="left:170px;top:360px;width:60px;height:18px;"></div>
<div class="cw" style="left:230px;top:360px;width:67px;height:18px;"></div>
<div class="cw" style="left:297px;top:360px;width:74px;height:18px;"></div>
<div class="cw" style="left:371px;top:360px;width:60px;height:18px;"></div>
<div class="cw" style="left:431px;top:360px;width:81px;height:18px;"></div>
<div class="ew" style="left:512px;top:360px;width:130px;height:18px;"></div>
<div class="ew" style="left:642px;top:360px;width:102px;height:18px;"></div>
<span class="t " style="left:69px;top:360px;letter-spacing:-0.675px;">4</span>
<span class="t " style="left:108px;top:360px;letter-spacing:-0.638px;">H01-X01</span>
<span class="t " style="left:191px;top:360px;letter-spacing:-0.204px;">PE</span>
<span class="t " style="left:246px;top:360px;letter-spacing:-0.565px;">H01.3</span>
<span class="t " style="left:441px;top:360px;letter-spacing:-0.223px;color:#0000ff;">GROUND</span>
<div class="clip" style="left:514px;top:361px;width:126px;height:16px">
<span class="t " style="left:0px;top:-1px;letter-spacing:-0.476px;color:#0000ff;">=41+S01-S11-W01</span>
</div>
<span class="t " style="left:644px;top:360px;letter-spacing:-0.188px;color:#0000ff;">GN/YE</span>
<div class="hd" style="left:0px;top:378px;width:25px;height:18px;"></div>
<div class="hd" style="left:25px;top:378px;width:25px;height:18px;"></div>
<span class="ar" style="left:0px;top:377px;color:#0000ff">▲</span>
<span class="ar" style="left:25px;top:378px;color:#0000ff">▼</span>
<div class="cw" style="left:50px;top:378px;width:46px;height:18px;"></div>
<div class="cw" style="left:96px;top:378px;width:74px;height:18px;"></div>
<div class="cw" style="left:170px;top:378px;width:60px;height:18px;"></div>
<div class="cw" style="left:230px;top:378px;width:67px;height:18px;"></div>
<div class="cw" style="left:297px;top:378px;width:74px;height:18px;"></div>
<div class="cw" style="left:371px;top:378px;width:60px;height:18px;"></div>
<div class="cw" style="left:431px;top:378px;width:81px;height:18px;"></div>
<div class="ew" style="left:512px;top:378px;width:130px;height:18px;"></div>
<div class="ew" style="left:642px;top:378px;width:102px;height:18px;"></div>
<span class="t " style="left:69px;top:378px;letter-spacing:-0.675px;">5</span>
<span class="t " style="left:108px;top:378px;letter-spacing:-0.638px;">H01-X01</span>
<span class="t " style="left:196px;top:378px;letter-spacing:-0.675px;">4</span>
<span class="t " style="left:246px;top:378px;letter-spacing:-0.565px;">H01.4</span>
<span class="t " style="left:434px;top:378px;letter-spacing:-0.114px;color:#0000ff;">STANDARD</span>
<div class="clip" style="left:514px;top:379px;width:126px;height:16px">
<span class="t " style="left:0px;top:-1px;letter-spacing:-0.476px;color:#0000ff;">=41+S01-S11-W02</span>
</div>
<span class="t " style="left:644px;top:378px;letter-spacing:-0.417px;color:#0000ff;">1/R423</span>
<div class="hd" style="left:0px;top:396px;width:25px;height:18px;"></div>
<div class="hd" style="left:25px;top:396px;width:25px;height:18px;"></div>
<span class="ar" style="left:0px;top:395px;color:#0000ff">▲</span>
<span class="ar" style="left:25px;top:396px;color:#0000ff">▼</span>
<div class="cw" style="left:50px;top:396px;width:46px;height:18px;"></div>
<div class="cw" style="left:96px;top:396px;width:74px;height:18px;"></div>
<div class="cw" style="left:170px;top:396px;width:60px;height:18px;"></div>
<div class="cw" style="left:230px;top:396px;width:67px;height:18px;"></div>
<div class="cw" style="left:297px;top:396px;width:74px;height:18px;"></div>
<div class="cw" style="left:371px;top:396px;width:60px;height:18px;"></div>
<div class="cw" style="left:431px;top:396px;width:81px;height:18px;"></div>
<div class="ew" style="left:512px;top:396px;width:130px;height:18px;"></div>
<div class="ew" style="left:642px;top:396px;width:102px;height:18px;"></div>
<span class="t " style="left:69px;top:396px;letter-spacing:-0.675px;">6</span>
<span class="t " style="left:108px;top:396px;letter-spacing:-0.638px;">H01-X01</span>
<span class="t " style="left:196px;top:396px;letter-spacing:-0.675px;">5</span>
<span class="t " style="left:246px;top:396px;letter-spacing:-0.565px;">H01.4</span>
<span class="t " style="left:434px;top:396px;letter-spacing:-0.114px;color:#0000ff;">STANDARD</span>
<div class="clip" style="left:514px;top:397px;width:126px;height:16px">
<span class="t " style="left:0px;top:-1px;letter-spacing:-0.476px;color:#0000ff;">=41+S01-S11-W02</span>
</div>
<span class="t " style="left:644px;top:396px;letter-spacing:-0.456px;color:#0000ff;">2/S423</span>
<div class="hd" style="left:0px;top:414px;width:25px;height:18px;"></div>
<div class="hd" style="left:25px;top:414px;width:25px;height:18px;"></div>
<span class="ar" style="left:0px;top:413px;color:#0000ff">▲</span>
<span class="ar" style="left:25px;top:414px;color:#0000ff">▼</span>
<div class="cw" style="left:50px;top:414px;width:46px;height:18px;"></div>
<div class="cw" style="left:96px;top:414px;width:74px;height:18px;"></div>
<div class="cw" style="left:170px;top:414px;width:60px;height:18px;"></div>
<div class="cw" style="left:230px;top:414px;width:67px;height:18px;"></div>
<div class="cw" style="left:297px;top:414px;width:74px;height:18px;"></div>
<div class="cw" style="left:371px;top:414px;width:60px;height:18px;"></div>
<div class="cw" style="left:431px;top:414px;width:81px;height:18px;"></div>
<div class="ew" style="left:512px;top:414px;width:130px;height:18px;"></div>
<div class="ew" style="left:642px;top:414px;width:102px;height:18px;"></div>
<span class="t " style="left:69px;top:414px;letter-spacing:-0.675px;">7</span>
<span class="t " style="left:108px;top:414px;letter-spacing:-0.638px;">H01-X01</span>
<span class="t " style="left:196px;top:414px;letter-spacing:-0.675px;">6</span>
<span class="t " style="left:246px;top:414px;letter-spacing:-0.565px;">H01.4</span>
<span class="t " style="left:434px;top:414px;letter-spacing:-0.114px;color:#0000ff;">STANDARD</span>
<div class="clip" style="left:514px;top:415px;width:126px;height:16px">
<span class="t " style="left:0px;top:-1px;letter-spacing:-0.476px;color:#0000ff;">=41+S01-S11-W02</span>
</div>
<span class="t " style="left:644px;top:414px;letter-spacing:-0.493px;color:#0000ff;">3/F423</span>
<div class="hd" style="left:0px;top:432px;width:25px;height:18px;"></div>
<div class="hd" style="left:25px;top:432px;width:25px;height:18px;"></div>
<span class="ar" style="left:0px;top:431px;color:#0000ff">▲</span>
<span class="ar" style="left:25px;top:432px;color:#0000ff">▼</span>
<div class="cw" style="left:50px;top:432px;width:46px;height:18px;"></div>
<div class="cw" style="left:96px;top:432px;width:74px;height:18px;"></div>
<div class="cw" style="left:170px;top:432px;width:60px;height:18px;"></div>
<div class="cw" style="left:230px;top:432px;width:67px;height:18px;"></div>
<div class="cw" style="left:297px;top:432px;width:74px;height:18px;"></div>
<div class="cw" style="left:371px;top:432px;width:60px;height:18px;"></div>
<div class="cw" style="left:431px;top:432px;width:81px;height:18px;"></div>
<div class="ew" style="left:512px;top:432px;width:130px;height:18px;"></div>
<div class="ew" style="left:642px;top:432px;width:102px;height:18px;"></div>
<span class="t " style="left:69px;top:432px;letter-spacing:-0.675px;">8</span>
<span class="t " style="left:108px;top:432px;letter-spacing:-0.638px;">H01-X01</span>
<span class="t " style="left:196px;top:432px;letter-spacing:-0.675px;">7</span>
<span class="t " style="left:246px;top:432px;letter-spacing:-0.565px;">H01.4</span>
<span class="t " style="left:434px;top:432px;letter-spacing:-0.114px;color:#0000ff;">STANDARD</span>
<div class="clip" style="left:514px;top:433px;width:126px;height:16px">
<span class="t " style="left:0px;top:-1px;letter-spacing:-0.476px;color:#0000ff;">=41+S01-S11-W02</span>
</div>
<span class="t " style="left:644px;top:432px;letter-spacing:-0.418px;color:#0000ff;">4/FR423</span>
<div class="hd" style="left:0px;top:450px;width:25px;height:18px;"></div>
<div class="hd" style="left:25px;top:450px;width:25px;height:18px;"></div>
<span class="ar" style="left:0px;top:449px;color:#0000ff">▲</span>
<span class="ar" style="left:25px;top:450px;color:#0000ff">▼</span>
<div class="cn" style="left:50px;top:450px;width:46px;height:18px;"></div>
<div class="cn" style="left:96px;top:450px;width:74px;height:18px;"></div>
<div class="cn" style="left:170px;top:450px;width:60px;height:18px;"></div>
<div class="cn" style="left:230px;top:450px;width:67px;height:18px;"></div>
<div class="cn" style="left:297px;top:450px;width:74px;height:18px;"></div>
<div class="cn" style="left:371px;top:450px;width:60px;height:18px;"></div>
<div class="cn" style="left:431px;top:450px;width:81px;height:18px;"></div>
<div class="en" style="left:512px;top:450px;width:130px;height:18px;"></div>
<div class="en" style="left:642px;top:450px;width:102px;height:18px;"></div>
<span class="t " style="left:69px;top:450px;letter-spacing:-0.675px;">1</span>
<div class="clip" style="left:97px;top:451px;width:72px;height:16px">
<span class="t " style="left:-17.4px;top:-1px;letter-spacing:-0.421px;">=41.H03+S11-X01</span>
</div>
<span class="t " style="left:196px;top:450px;letter-spacing:-0.675px;">1</span>
<span class="t " style="left:246px;top:450px;letter-spacing:-0.565px;">H03.2</span>
<span class="t " style="left:434px;top:450px;letter-spacing:-0.114px;color:#0000ff;">STANDARD</span>
<div class="clip" style="left:514px;top:451px;width:126px;height:16px">
<span class="t " style="left:0px;top:-1px;letter-spacing:-0.504px;color:#0000ff;">=41.H11+S11-M11-W01</span>
</div>
<span class="t " style="left:644px;top:450px;letter-spacing:-0.675px;color:#0000ff;">1</span>
</div>
<div style="left:952px;top:148px;width:13px;height:465px;background:#b3b3b3;border:1px solid;border-color:#828282 #fff #fff #828282"></div>
<svg style="left:952px;top:148px" width="13" height="465" viewBox="0 0 13 465" shape-rendering="crispEdges"><polygon points="6.5,1.2 12.2,11.5 0.8,11.5" fill="#d9d9d9"/><line x1="6.5" y1="1.2" x2="0.9" y2="11.6" stroke="#fff" stroke-width="1" shape-rendering="auto"/><line x1="6.5" y1="1.2" x2="12.1" y2="11.6" stroke="#828282" stroke-width="1" shape-rendering="auto"/><rect x="1" y="11" width="11" height="1" fill="#828282"/><polygon points="6.5,463.6 12.2,453.5 0.8,453.5" fill="#d9d9d9"/><rect x="1" y="453" width="11" height="1" fill="#fff"/><line x1="6.5" y1="463.6" x2="0.9" y2="453.4" stroke="#fff" stroke-width="1" shape-rendering="auto"/><line x1="6.5" y1="463.6" x2="12.1" y2="453.4" stroke="#828282" stroke-width="1" shape-rendering="auto"/></svg>
<div class="rs" style="left:953px;top:161px;width:11px;height:231px"></div><div style="left:960px;top:0;width:17.5px;height:622px;background:linear-gradient(90deg,rgba(0,0,0,0) 0,rgba(0,0,0,.235) 100%);-webkit-mask-image:linear-gradient(180deg,rgba(0,0,0,.55) 0,#000 22px);mask-image:linear-gradient(180deg,rgba(0,0,0,.55) 0,#000 22px)"></div>
<div id="lw" style="left:977.2px;top:0;width:345.8px;height:621px;background:#d9d9d9;"></div>
<div style="left:978px;top:621px;width:345px;height:1px;background:#b9b9b9"></div>
<svg style="left:978px;top:0" width="345" height="30" viewBox="978 0 345 30"><polyline points="995.4,7.4 999,10.3 1002.6,7.4" fill="none" stroke="#2e2e2e" stroke-width="1.45" stroke-linecap="round" stroke-linejoin="round"/><rect x="1271.5" y="7.5" width="7" height="3" fill="#e2e2e2"/><rect x="1272" y="8" width="6" height="2" fill="#2b2b2b"/><circle cx="1303" cy="9" r="7" fill="#92b572"/><path d="M1300.2,6.2 L1305.8,11.8 M1305.8,6.2 L1300.2,11.8" stroke="#fff" stroke-width="1.9" fill="none"/></svg>
<span id="lt" style="left:1068.8px;top:1.7px;font-size:12.5px;line-height:18px;white-space:pre;color:#454545;-webkit-text-stroke:0.45px #454545;letter-spacing:0.76px">Terminal-block legend</span>
<div style="left:996px;top:30px;width:310px;height:546px;background:#fff"></div>
<svg style="left:996px;top:30px" width="310" height="546" viewBox="996 30 310 546"><g stroke="#000" fill="none">
<line x1="1119.62" y1="44" x2="1119.62" y2="99" stroke-width="1.5"/>
<line x1="1143.66" y1="44" x2="1143.66" y2="99" stroke-width="1.5"/>
<line x1="1167.70" y1="44" x2="1167.70" y2="99" stroke-width="1.5"/>
<line x1="1191.74" y1="44" x2="1191.74" y2="99" stroke-width="1.5"/>
<line x1="1215.78" y1="44" x2="1215.78" y2="99" stroke-width="1.5"/>
<line x1="1107.80" y1="98.3" x2="1107.80" y2="291.7" stroke-width="1.5"/>
<line x1="1131.86" y1="98.3" x2="1131.86" y2="291.7" stroke-width="1.5"/>
<line x1="1155.92" y1="98.3" x2="1155.92" y2="291.7" stroke-width="1.5"/>
<line x1="1179.98" y1="98.3" x2="1179.98" y2="291.7" stroke-width="1.5"/>
<line x1="1204.04" y1="98.3" x2="1204.04" y2="291.7" stroke-width="1.5"/>
<line x1="1228.10" y1="98.3" x2="1228.10" y2="291.7" stroke-width="1.5"/>
<line x1="1107.20" y1="99.0" x2="1228.70" y2="99.0" stroke-width="1.6"/>
<line x1="1107.20" y1="291.0" x2="1228.70" y2="291.0" stroke-width="1.6"/>
<line x1="1047.75" y1="122.5" x2="1047.75" y2="267.8" stroke-width="1.5"/>
<line x1="1100.70" y1="122.5" x2="1100.70" y2="267.8" stroke-width="1.5"/>
<line x1="1047.10" y1="123.2" x2="1101.30" y2="123.2" stroke-width="1.6"/>
<line x1="1047.10" y1="267.1" x2="1101.30" y2="267.1" stroke-width="1.6"/>
<line x1="1100.70" y1="153.4" x2="1107.80" y2="153.4" stroke-width="1.6"/>
<line x1="1100.70" y1="237.2" x2="1107.80" y2="237.2" stroke-width="1.6"/>
<line x1="1131.86" y1="173.5" x2="1155.92" y2="173.5" stroke-width="1.6"/>
<line x1="1131.86" y1="216.5" x2="1155.92" y2="216.5" stroke-width="1.6"/>
<line x1="1119.62" y1="291" x2="1119.62" y2="375.8" stroke-width="1.5"/>
<line x1="1143.66" y1="291" x2="1143.66" y2="375.8" stroke-width="1.5"/>
<line x1="1167.70" y1="291" x2="1167.70" y2="375.8" stroke-width="1.5"/>
<line x1="1191.74" y1="291" x2="1191.74" y2="346" stroke-width="1.5"/>
<line x1="1215.78" y1="291" x2="1215.78" y2="346" stroke-width="1.5"/>
<line x1="1118.97" y1="375.1" x2="1168.35" y2="375.1" stroke-width="1.6"/>
<line x1="1143.66" y1="375" x2="1143.66" y2="472" stroke-width="1.5"/>
<line x1="1118.97" y1="471.5" x2="1168.35" y2="471.5" stroke-width="1.6"/>
<line x1="1119.62" y1="471" x2="1119.62" y2="550" stroke-width="1.5"/>
<line x1="1143.66" y1="471" x2="1143.66" y2="550" stroke-width="1.5"/>
<line x1="1167.70" y1="471" x2="1167.70" y2="550" stroke-width="1.5"/>
</g>
<g>
<rect x="1118.87" y="38" width="1.5" height="2" fill="#0000ff"/><rect x="1118.87" y="40" width="1.5" height="4" fill="#ff0000"/>
<rect x="1142.91" y="38" width="1.5" height="2" fill="#0000ff"/><rect x="1142.91" y="40" width="1.5" height="4" fill="#ff0000"/>
<rect x="1166.95" y="38" width="1.5" height="2" fill="#0000ff"/><rect x="1166.95" y="40" width="1.5" height="4" fill="#ff0000"/>
<rect x="1190.99" y="38" width="1.5" height="2" fill="#0000ff"/><rect x="1190.99" y="40" width="1.5" height="4" fill="#ff0000"/>
<rect x="1215.03" y="38" width="1.5" height="2" fill="#0000ff"/><rect x="1215.03" y="40" width="1.5" height="4" fill="#ff0000"/>
<rect x="1190.99" y="346" width="1.5" height="4" fill="#ff0000"/><rect x="1190.99" y="350" width="1.5" height="2" fill="#0000ff"/>
<rect x="1215.03" y="346" width="1.5" height="4" fill="#ff0000"/><rect x="1215.03" y="350" width="1.5" height="2" fill="#0000ff"/>
<rect x="1118.87" y="550" width="1.5" height="4" fill="#ff0000"/><rect x="1118.87" y="554" width="1.5" height="2" fill="#0000ff"/>
<rect x="1142.91" y="550" width="1.5" height="4" fill="#ff0000"/><rect x="1142.91" y="554" width="1.5" height="2" fill="#0000ff"/>
<rect x="1166.95" y="550" width="1.5" height="4" fill="#ff0000"/><rect x="1166.95" y="554" width="1.5" height="2" fill="#0000ff"/>
</g>
<g stroke="#000" stroke-width="1" fill="none">
<line x1="1119.55" y1="182.5" x2="1119.55" y2="195.3"/><line x1="1110" y1="195.3" x2="1129.1" y2="195.3"/><line x1="1112.2" y1="197.6" x2="1126.9" y2="197.6"/><line x1="1114.8" y1="200.1" x2="1124.3" y2="200.1" stroke-width="1.3" stroke="#333"/><line x1="1117.1" y1="202.6" x2="1122" y2="202.6"/>
<rect x="1140.1" y="180.5" width="6.8" height="28.8"/><line x1="1143.6" y1="176.8" x2="1143.6" y2="213.8"/>
<circle cx="1167.8" cy="195.25" r="2.55" stroke-width="1.1"/><circle cx="1191.65" cy="195.25" r="2.55" stroke-width="1.1"/><circle cx="1215.8" cy="195.25" r="2.55" stroke-width="1.1"/><line x1="1191.65" y1="195.3" x2="1215.8" y2="195.3" stroke-width="1.1"/>
<line x1="1117.42" y1="361.0" x2="1122.62" y2="366.0" stroke-width="1.3"/>
<line x1="1117.42" y1="497.5" x2="1122.62" y2="502.5" stroke-width="1.3"/>
<line x1="1141.46" y1="361.0" x2="1146.66" y2="366.0" stroke-width="1.3"/>
<line x1="1141.46" y1="497.5" x2="1146.66" y2="502.5" stroke-width="1.3"/>
<line x1="1165.50" y1="361.0" x2="1170.70" y2="366.0" stroke-width="1.3"/>
<line x1="1165.50" y1="497.5" x2="1170.70" y2="502.5" stroke-width="1.3"/>
</g>
<g font-family="'DejaVu Sans',sans-serif">
<text transform="translate(1116.52 71.4) rotate(-90)" font-size="9.5" fill="#111" letter-spacing="0.9">10</text>
<text transform="translate(1116.32 327) rotate(-90)" font-size="9.6" fill="#111" letter-spacing="0.2">10</text>
<text transform="translate(1140.56 71.4) rotate(-90)" font-size="9.5" fill="#111" letter-spacing="0.9">11</text>
<text transform="translate(1140.36 327) rotate(-90)" font-size="9.6" fill="#111" letter-spacing="0.2">11</text>
<text transform="translate(1164.60 71.4) rotate(-90)" font-size="9.5" fill="#111" letter-spacing="0.9">12</text>
<text transform="translate(1164.40 327) rotate(-90)" font-size="9.6" fill="#111" letter-spacing="0.2">12</text>
<text transform="translate(1188.64 71.4) rotate(-90)" font-size="9.5" fill="#111" letter-spacing="0.9">20</text>
<text transform="translate(1188.44 327) rotate(-90)" font-size="9.6" fill="#111" letter-spacing="0.2">20</text>
<text transform="translate(1212.68 71.4) rotate(-90)" font-size="9.5" fill="#111" letter-spacing="0.9">21</text>
<text transform="translate(1212.48 327) rotate(-90)" font-size="9.6" fill="#111" letter-spacing="0.2">21</text>
<text transform="translate(1124.52 151.5) rotate(-90)" font-size="10" fill="#111" >3-D4</text>
<text transform="translate(1148.56 151.5) rotate(-90)" font-size="10" fill="#111" >3-D5</text>
<text transform="translate(1172.60 151.5) rotate(-90)" font-size="10" fill="#111" >3-D6</text>
<text transform="translate(1196.64 151.5) rotate(-90)" font-size="10" fill="#111" >3-D7</text>
<text transform="translate(1220.68 151.5) rotate(-90)" font-size="10" fill="#111" >3-D8</text>
<text transform="translate(1127.02 283) rotate(-90)" font-size="14.2" fill="#5e5e5e" >1</text>
<text transform="translate(1151.06 283) rotate(-90)" font-size="14.2" fill="#5e5e5e" >2</text>
<text transform="translate(1175.10 283) rotate(-90)" font-size="14.2" fill="#5e5e5e" >3</text>
<text transform="translate(1199.14 283) rotate(-90)" font-size="14.2" fill="#5e5e5e" >4</text>
<text transform="translate(1223.18 283) rotate(-90)" font-size="14.2" fill="#5e5e5e" >6</text>
<text transform="translate(1116.52 371.2) rotate(-90)" font-size="10" fill="#111" >yl/gn</text>
<text transform="translate(1116.52 508.2) rotate(-90)" font-size="10" fill="#111" >yl/gn</text>
<text transform="translate(1140.56 371.2) rotate(-90)" font-size="10" fill="#111" >rd</text>
<text transform="translate(1140.56 508.2) rotate(-90)" font-size="10" fill="#111" >rd</text>
<text transform="translate(1164.60 371.2) rotate(-90)" font-size="10" fill="#111" >bk</text>
<text transform="translate(1164.60 508.2) rotate(-90)" font-size="10" fill="#111" >bk</text>
<text transform="translate(1140.60 430.6) rotate(-90)" font-size="10" fill="#111" >-W2</text>
<text transform="translate(1082.60 205.6) rotate(-90)" font-size="21.5" fill="#7d7d7d" textLength="26.2" lengthAdjust="spacingAndGlyphs">X2</text>
</g>
<g stroke="#c9000f" stroke-width="1.9" fill="none">
<line x1="1221.1" y1="61.6" x2="1269.6" y2="184.9"/>
<line x1="1268.8" y1="225.3" x2="1223.6" y2="332"/>
<line x1="1104.9" y1="204.2" x2="1051.4" y2="336.4"/>
<line x1="1115.7" y1="261.6" x2="1058.3" y2="418.6"/>
<line x1="1168.6" y1="343" x2="1217.1" y2="398.7"/>
<line x1="1143.6" y1="428.7" x2="1215.6" y2="462"/>
<line x1="1167.8" y1="516" x2="1214.7" y2="528"/>
</g>
<g font-family="'Liberation Sans',sans-serif" font-weight="bold" font-size="28.5" fill="#c9000f">
<text transform="translate(1016.6 206.9) scale(1 1.07)">A</text>
<text transform="translate(1059.6 114.9) scale(1 1.035)">B</text>
<text transform="translate(1264.8 215.9) scale(1 1.035)">G</text>
<text transform="translate(1013.8 367.8) scale(1 1.03)">CxD</text>
<text transform="translate(1016.2 448.9) scale(0.94 1.035)">ExF</text>
<text transform="translate(1220.2 422.6) scale(1 1.03)">H</text>
<text transform="translate(1220.7 478.6) scale(1 1.035)">I</text>
</g>
<text transform="translate(1220.4 538.2) scale(0.93 1)" font-family="'DejaVu Sans',sans-serif" font-weight="bold" font-size="28" fill="#c9000f">J</text></svg>
<div style="left:995px;top:583px;width:47px;height:28px;border:1px solid #000;background:#d9d9d9"><div style="left:0;top:0;right:0;bottom:0;border:1px solid;border-color:#fff #828282 #828282 #fff"></div></div>
<span class="t" style="left:1009.2px;top:588px;letter-spacing:-0.5px">OK</span>
</body></html>
